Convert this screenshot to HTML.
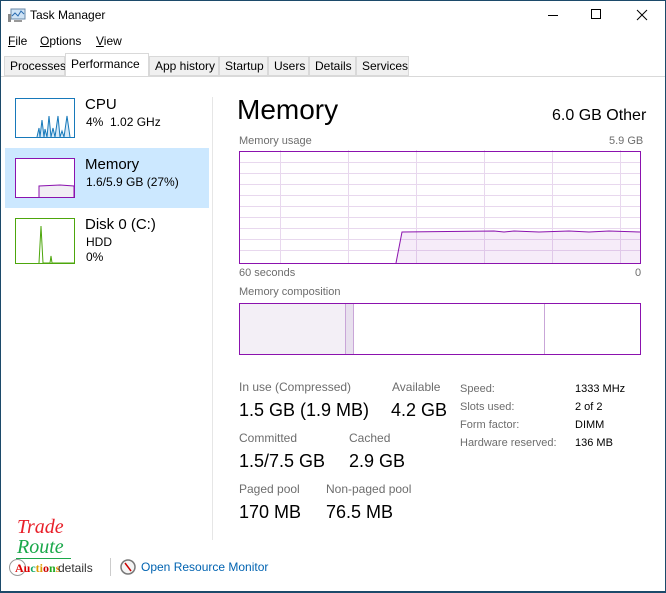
<!DOCTYPE html>
<html><head><style>
*{margin:0;padding:0;box-sizing:border-box}
body{width:666px;height:593px;overflow:hidden;background:#fff;font-family:"Liberation Sans",sans-serif;position:relative;color:#000}
.a{position:absolute;white-space:nowrap}
.win{position:absolute;left:0;top:0;width:666px;height:593px;border:1px solid #1c4a6a;border-bottom-width:2px}
.tab{position:absolute;top:56px;height:20px;background:#f0f0f0;border:1px solid #d9d9d9;font-size:12px;padding:2px 0 0 5px;color:#000}
.g{color:#6d6d6d;font-size:11px}
.big{font-size:18px}
</style></head><body>
<div class="win"></div>
<!-- title -->
<svg class="a" style="left:8px;top:8px" width="18" height="16"><rect x="3" y="1" width="14" height="10" fill="#cfe3f5" stroke="#6a8aa8"/><polyline points="4,8 7,5 10,8 13,3 16,6" fill="none" stroke="#2b6cb0"/><rect x="0" y="6" width="3" height="8" fill="#888"/><rect x="6" y="12" width="8" height="2" fill="#999"/></svg>
<div class="a" style="left:30px;top:8px;font-size:12px">Task Manager</div>
<div class="a" style="left:548px;top:15px;width:10px;height:1px;background:#000"></div>
<div class="a" style="left:591px;top:9px;width:10px;height:10px;border:1px solid #000"></div>
<svg class="a" style="left:636px;top:9px" width="12" height="12"><path d="M1 1L11 11M11 1L1 11" stroke="#000"/></svg>
<div class="a" style="left:8px;top:34px;font-size:12px"><u>F</u>ile</div>
<div class="a" style="left:40px;top:34px;font-size:12px"><u>O</u>ptions</div>
<div class="a" style="left:96px;top:34px;font-size:12px"><u>V</u>iew</div>
<div class="tab" style="left:4px;width:61px">Processes</div>
<div class="tab" style="left:65px;top:53px;height:24px;width:84px;background:#fff;border-bottom:none;padding-top:3px">Performance</div>
<div class="tab" style="left:149px;width:70px">App history</div>
<div class="tab" style="left:219px;width:49px">Startup</div>
<div class="tab" style="left:268px;width:41px">Users</div>
<div class="tab" style="left:309px;width:47px">Details</div>
<div class="tab" style="left:356px;width:53px">Services</div>
<div class="a" style="left:1px;top:76px;width:664px;height:1px;background:#d9d9d9"></div>
<!-- left pane -->
<div class="a" style="left:212px;top:97px;width:1px;height:443px;background:#e6e6e6"></div>
<svg class="a" style="left:15px;top:98px" width="60" height="40"><rect x="0.5" y="0.5" width="59" height="39" fill="#fff" stroke="#1779ba"/><polyline points="22,39 24,30 25,39 27,22 29,39 30,31 32,39 34,18 36,39 38,30 40,39 43,18 45,39 47,33 49,39 52,18 55,39" fill="#d6e9f7" stroke="#1779ba"/></svg>
<div class="a" style="left:85px;top:96px;font-size:15px">CPU</div>
<div class="a" style="left:86px;top:115px;font-size:12px">4%&nbsp; 1.02 GHz</div>
<div class="a" style="left:5px;top:148px;width:204px;height:60px;background:#cce8ff"></div>
<svg class="a" style="left:15px;top:158px" width="60" height="40"><rect x="0.5" y="0.5" width="59" height="39" fill="#fff" stroke="#8b12ae"/><polyline points="24,39 24,28 45,27 59,28 59,39" fill="#f1eef4" stroke="#8b12ae"/></svg>
<div class="a" style="left:85px;top:156px;font-size:15px">Memory</div>
<div class="a" style="left:86px;top:175px;font-size:12px">1.6/5.9 GB (27%)</div>
<svg class="a" style="left:15px;top:218px" width="60" height="46"><rect x="0.5" y="0.5" width="59" height="45" fill="#fff" stroke="#4da60c"/><polyline points="24,45 26,8 28,45 35,45 36,38 37,45 59,45" fill="none" stroke="#4da60c"/></svg>
<div class="a" style="left:85px;top:216px;font-size:15px">Disk 0 (C:)</div>
<div class="a" style="left:86px;top:235px;font-size:12px">HDD</div>
<div class="a" style="left:86px;top:250px;font-size:12px">0%</div>
<!-- right -->
<div class="a" style="left:237px;top:94px;font-size:28px">Memory</div>
<div class="a" style="left:552px;top:107px;font-size:16px">6.0 GB Other</div>
<div class="a g" style="left:239px;top:135px">Memory usage</div>
<div class="a g" style="left:609px;top:135px">5.9 GB</div>
<svg class="a" style="left:239px;top:150px" width="402" height="114">
<g stroke="#e8d8ee" stroke-width="1">
<path d="M0 12.5H402M0 23.5H402M0 34.5H402M0 45.5H402M0 56.5H402M0 67.5H402M0 78.5H402M0 89.5H402M0 100.5H402"/>
<path d="M41.5 0V114M109.5 0V114M177.5 0V114M245.5 0V114M313.5 0V114M381.5 0V114"/>
</g>
<polygon points="157,113 163,82 255,81 265,82 275,81 300,82 330,81 350,82 370,81 401,82 401,113" fill="#8b12ae" fill-opacity="0.08"/>
<polyline points="157,113 163,82 255,81 265,82 275,81 300,82 330,81 350,82 370,81 401,82" fill="none" stroke="#8b12ae"/>
<rect x="0.5" y="1.5" width="401" height="112" fill="none" stroke="#8b12ae"/>
</svg>
<div class="a g" style="left:239px;top:267px">60 seconds</div>
<div class="a g" style="left:635px;top:267px">0</div>
<div class="a g" style="left:239px;top:286px">Memory composition</div>
<svg class="a" style="left:239px;top:303px" width="402" height="52">
<rect x="0" y="0" width="106" height="52" fill="#f3eff6"/>
<rect x="106" y="0" width="8" height="52" fill="#e8e0ee"/>
<path d="M106.5 0V52M114.5 0V52M305.5 0V52" stroke="#c9a6d8"/>
<rect x="0.5" y="0.5" width="401" height="51" fill="none" stroke="#8b12ae"/>
</svg>
<div class="a g" style="left:239px;top:380px;font-size:12px">In use (Compressed)</div>
<div class="a big" style="left:239px;top:400px">1.5 GB (1.9 MB)</div>
<div class="a g" style="left:392px;top:380px;font-size:12px">Available</div>
<div class="a big" style="left:391px;top:400px">4.2 GB</div>
<div class="a g" style="left:239px;top:431px;font-size:12px">Committed</div>
<div class="a big" style="left:239px;top:451px">1.5/7.5 GB</div>
<div class="a g" style="left:349px;top:431px;font-size:12px">Cached</div>
<div class="a big" style="left:349px;top:451px">2.9 GB</div>
<div class="a g" style="left:239px;top:482px;font-size:12px">Paged pool</div>
<div class="a big" style="left:239px;top:502px">170 MB</div>
<div class="a g" style="left:326px;top:482px;font-size:12px">Non-paged pool</div>
<div class="a big" style="left:326px;top:502px">76.5 MB</div>
<div class="a g" style="left:460px;top:380px;line-height:18px">Speed:<br>Slots used:<br>Form factor:<br>Hardware reserved:</div>
<div class="a" style="left:575px;top:380px;font-size:11px;line-height:18px">1333 MHz<br>2 of 2<br>DIMM<br>136 MB</div>
<!-- footer -->
<div class="a" style="left:17px;top:516px;font-family:'Liberation Serif',serif;font-style:italic;font-size:20px;color:#e8202a">Trade</div>
<div class="a" style="left:17px;top:536px;font-family:'Liberation Serif',serif;font-style:italic;font-size:20px;color:#1aa84a">Route</div>
<div class="a" style="left:16px;top:558px;width:55px;height:1px;background:#1aa84a"></div>
<div class="a" style="left:9px;top:559px;width:17px;height:17px;border:1px solid #999;border-radius:50%"></div>
<div class="a" style="left:15px;top:561px;font-size:12px;font-family:'Liberation Serif',serif;font-weight:bold"><span style="color:#d00">Au</span><span style="color:#1a6">c</span><span style="color:#d90">ti</span><span style="color:#c00">o</span><span style="color:#2a2">n</span><span style="color:#e80">s</span></div>
<div class="a" style="left:58px;top:561px;font-size:12px;color:#333">details</div>
<div class="a" style="left:110px;top:558px;width:1px;height:18px;background:#ccc"></div>
<svg class="a" style="left:120px;top:559px" width="16" height="16"><circle cx="8" cy="8" r="7" fill="#f4f4f4" stroke="#777" stroke-width="1.5"/><path d="M5 4L11 12" stroke="#c00" stroke-width="1.5"/></svg>
<div class="a" style="left:141px;top:560px;font-size:12px;color:#0063b1">Open Resource Monitor</div>
</body></html>
